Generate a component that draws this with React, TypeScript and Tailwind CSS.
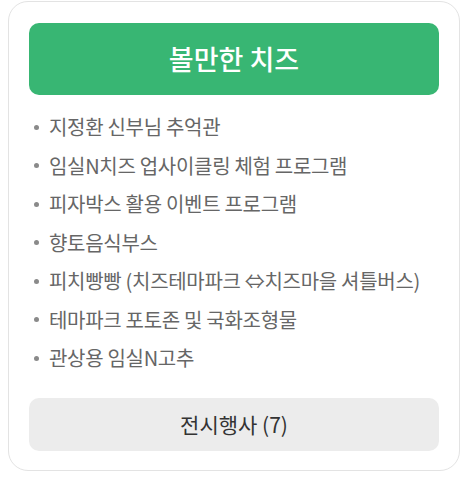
const items = [
  "지정환 신부님 추억관",
  "임실N치즈 업사이클링 체험 프로그램",
  "피자박스 활용 이벤트 프로그램",
  "향토음식부스",
  "피치빵빵 (치즈테마파크 ⇔치즈마을 셔틀버스)",
  "테마파크 포토존 및 국화조형물",
  "관상용 임실N고추",
];

export default function App() {
  return (
    <div className="h-[485px] w-[468px] bg-white pl-[8px] pt-[1px] font-['Noto_Sans_CJK_KR',sans-serif]">
      <div className="flex h-[470px] w-[452px] flex-col rounded-[20px] border border-[#e3e3e3] px-[20px] pt-[21px] pb-[19px]">
        {/* Title */}
        <div className="flex h-[72px] items-center justify-center rounded-[10px] bg-[#38b673]">
          <span className="text-[27px] font-medium text-white">볼만한 치즈</span>
        </div>

        {/* Items */}
        <ul className="mt-[13px] flex flex-col">
          {items.map((item) => (
            <li key={item} className="flex h-[38.5px] items-center">
              <span className="ml-[5px] mr-[10px] h-[5px] w-[5px] rounded-full bg-[#8a8a8a]" />
              <span className="text-[20px] font-normal leading-none tracking-[-0.3px] text-[#666666]">{item}</span>
            </li>
          ))}
        </ul>

        {/* Footer */}
        <button className="mt-auto flex h-[53px] items-center justify-center rounded-[10px] bg-[#ececec]">
          <span className="text-[21px] font-normal text-[#333333]">전시행사 (7)</span>
        </button>
      </div>
    </div>
  );
}
